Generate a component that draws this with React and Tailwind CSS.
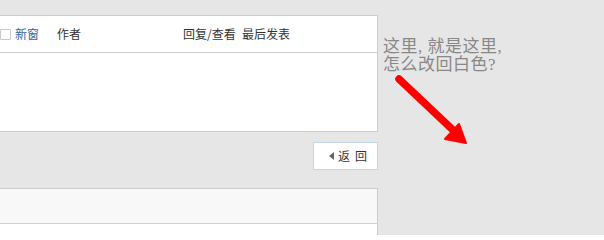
export default function App() {
  return (
    <div
      className="w-[604px] h-[235px] overflow-hidden bg-[#e6e6e6] flex"
      style={{ fontFamily: '"Noto Sans CJK SC", sans-serif' }}
    >
      <div className="w-[378px] shrink-0 pt-[15px] flex flex-col">
        <div className="bg-white border-t border-r border-b border-[#cccccc]">
          <div className="h-[37px] border-b border-[#cccccc] flex items-center text-[12px] text-[#333]">
            <span className="w-[11px] h-[11px] border border-[#c8c8c8] bg-white rounded-[1px] shrink-0"></span>
            <span className="ml-[4px] text-[#336699] leading-none">新窗</span>
            <span className="ml-[18px] leading-none">作者</span>
            <span className="ml-[102px] w-[59px] leading-none">回复/查看</span>
            <span className="leading-none">最后发表</span>
          </div>
          <div className="h-[78px]"></div>
        </div>
        <div className="flex justify-end mt-[10px]">
          <div className="w-[65px] h-[28px] bg-white border border-[#c2d5e3] flex items-center pl-[15px] text-[12px] text-[#333]">
            <span className="w-0 h-0 border-y-[4px] border-y-transparent border-r-[5px] border-r-[#666] mr-[4px]"></span>
            <span className="leading-none">返</span>
            <span className="leading-none ml-[5px]">回</span>
          </div>
        </div>
        <div className="mt-[18px] border-t border-r border-[#cccccc] flex flex-col">
          <div className="h-[35px] bg-[#f8f8f8] border-b border-[#c2d5e3]"></div>
          <div className="h-[20px] bg-white"></div>
        </div>
      </div>
      <div className="flex-1 pl-[5px] pt-[38px] flex flex-col">
        <div
          className="text-[17px] leading-[18px] tracking-[0.5px] text-[#888888]"
          style={{ fontFamily: '"Liberation Serif", "Noto Sans CJK SC", serif' }}
        >
          <div>这里, 就是这里,</div>
          <div>怎么改回白色?</div>
        </div>
        <svg width="100" height="80" viewBox="383 74 100 80" className="block">
          <line x1="399" y1="79" x2="454" y2="131" stroke="#ff0000" strokeWidth="7.5" strokeLinecap="round" />
          <polygon points="445,139 459,124 466,143" fill="#ff0000" stroke="#ff0000" strokeWidth="2" strokeLinejoin="round" />
        </svg>
      </div>
    </div>
  );
}
